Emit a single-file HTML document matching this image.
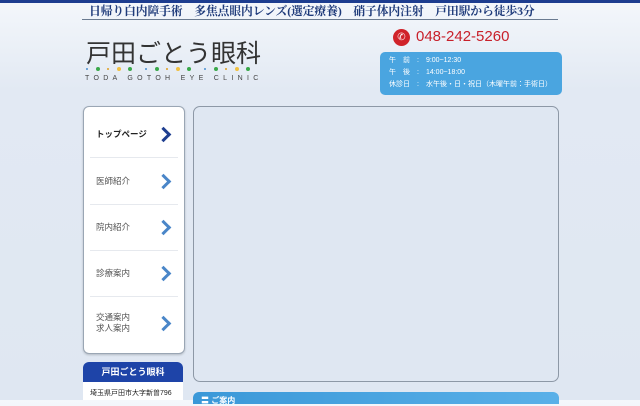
<!DOCTYPE html>
<html><head><meta charset="utf-8"><style>
body{margin:0;width:640px;height:400px;overflow:hidden;background:linear-gradient(#f4f7fb 0,#e2e9f3 90px,#dfe7f2 100%);font-family:"Liberation Sans","Noto Sans CJK JP",sans-serif;position:relative}
.a{position:absolute}
.nav{left:83px;top:106px;width:100px;height:246px;background:#fff;border:1px solid #9aa6b4;border-radius:6px;box-shadow:0 1px 2px rgba(0,0,0,.2)}
.it{position:absolute;left:12px;width:80px;font-size:8.5px;color:#555;line-height:11px}
.ch{position:absolute;left:74px;width:8px;height:8px;border-right:3px solid #4a86c8;border-bottom:3px solid #4a86c8;transform:rotate(-45deg)}
.sep{position:absolute;left:6px;width:88px;height:1px;background:#e6e9ee}
.d{position:absolute;top:67px;width:4px;height:4px;border-radius:50%}
</style></head><body>
<div class="a" style="left:0;top:0;width:640px;height:3px;background:#1d3d8f"></div>
<div class="a" style="left:89px;top:2px;font-family:'Liberation Serif','Noto Serif CJK SC',serif;font-size:11.8px;font-weight:bold;color:#1e3a7a;white-space:nowrap;letter-spacing:-0.1px">日帰り白内障手術　多焦点眼内レンズ(選定療養)　硝子体内注射　戸田駅から徒歩3分</div>
<div class="a" style="left:82px;top:19px;width:476px;height:1px;background:#6a7a90"></div>
<div class="a" style="left:86px;top:34px;font-size:25px;color:#333">戸田ごとう眼科</div>
<div class="d" style="left:86px;background:#4a8fd0;width:2px;height:2px;top:68px"></div>
<div class="d" style="left:96px;background:#3aa84a"></div>
<div class="d" style="left:107px;background:#e0a020;width:2px;height:2px;top:68px"></div>
<div class="d" style="left:117px;background:#f0c040"></div>
<div class="d" style="left:128px;background:#3aa84a"></div>
<div class="d" style="left:145px;background:#4a8fd0;width:2px;height:2px;top:68px"></div>
<div class="d" style="left:155px;background:#3aa84a"></div>
<div class="d" style="left:166px;background:#e0a020;width:2px;height:2px;top:68px"></div>
<div class="d" style="left:176px;background:#f0c040"></div>
<div class="d" style="left:187px;background:#3aa84a"></div>
<div class="d" style="left:204px;background:#4a8fd0;width:2px;height:2px;top:68px"></div>
<div class="d" style="left:214px;background:#3aa84a"></div>
<div class="d" style="left:225px;background:#e0a020;width:2px;height:2px;top:68px"></div>
<div class="d" style="left:235px;background:#f0c040"></div>
<div class="d" style="left:246px;background:#3aa84a"></div>
<div class="a" style="left:85px;top:75px;font-size:7px;color:#444;letter-spacing:4.3px;white-space:nowrap">TODA GOTOH EYE CLINIC</div>
<div class="a" style="left:393px;top:29px;width:17px;height:17px;border-radius:50%;background:#d0232a;color:#fff;font-size:10px;text-align:center;line-height:17px">✆</div>
<div class="a" style="left:416px;top:28px;font-size:15px;color:#c8202a">048-242-5260</div>
<div class="a" style="left:380px;top:52px;width:182px;height:43px;background:#4aa5e0;border-radius:5px;color:#fff;font-size:7px;line-height:12px;padding:3px 0 0 9px;box-sizing:border-box;white-space:nowrap">午　前　:　9:00~12:30<br>午　後　:　14:00~18:00<br>休診日　:　水午後・日・祝日（木曜午前：手術日）</div>
<div class="a nav">
<div class="it" style="top:22px;color:#222;font-weight:bold">トップページ</div><div class="ch" style="top:22px;border-color:#1f3f90"></div>
<div class="sep" style="top:50px"></div>
<div class="it" style="top:69px">医師紹介</div><div class="ch" style="top:69px"></div>
<div class="sep" style="top:97px"></div>
<div class="it" style="top:115px">院内紹介</div><div class="ch" style="top:115px"></div>
<div class="sep" style="top:143px"></div>
<div class="it" style="top:161px">診療案内</div><div class="ch" style="top:161px"></div>
<div class="sep" style="top:189px"></div>
<div class="it" style="top:205px">交通案内<br>求人案内</div><div class="ch" style="top:211px"></div>
</div>
<div class="a" style="left:193px;top:106px;width:364px;height:274px;background:#dfe7f2;border:1px solid #8d98a6;border-radius:7px"></div>
<div class="a" style="left:83px;top:362px;width:100px;height:20px;background:#1e44a8;border-radius:6px 6px 0 0;color:#fff;font-size:9px;font-weight:bold;text-align:center;line-height:20px">戸田ごとう眼科</div>
<div class="a" style="left:83px;top:382px;width:100px;height:18px;background:#fff;font-size:7px;color:#222;padding:6px 0 0 7px;box-sizing:border-box;white-space:nowrap">埼玉県戸田市大字新曽796</div>
<div class="a" style="left:193px;top:392px;width:366px;height:12px;background:linear-gradient(90deg,#3a98d8,#5ab0e8);border-radius:6px 6px 0 0;color:#fff;font-size:8px;font-weight:bold;padding:3px 0 0 8px;box-sizing:border-box">〓 ご案内</div>
</body></html>
